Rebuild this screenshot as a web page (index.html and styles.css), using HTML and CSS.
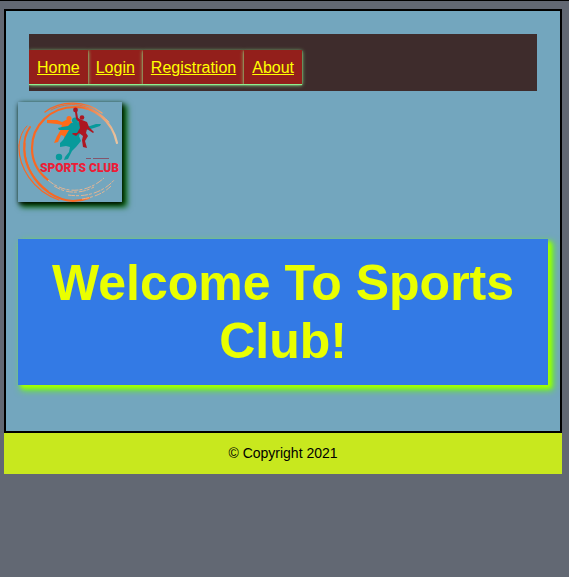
FILE: index.html
```html
<!DOCTYPE html>
<html lang="en">
<head>
<meta charset="utf-8">
<title>Sports Club</title>
<link rel="stylesheet" href="styles.css">
</head>
<body>
<main class="page">
  <nav class="menu">
    <a href="#">Home</a><a href="#">Login</a><a href="#">Registration</a><a href="#">About</a>
  </nav>
  <svg class="logo" viewBox="0 0 104 100" role="img" aria-label="Sports Club">
    <defs>
      <linearGradient id="fade" gradientUnits="userSpaceOnUse" x1="0" x2="104" y1="0" y2="0">
        <stop offset="0.6" stop-color="#f86824"/>
        <stop offset="0.95" stop-color="#e9c4a0"/>
      </linearGradient>
    </defs>
    <g fill="none" stroke="url(#fade)" stroke-linecap="round">
      <path stroke-width="2.2" d="M99 41C94 18 76 5 57 5C33 5 14 23 14 46C14 60 21 71 30 78"/>
      <path stroke-width="1.4" d="M27 10C43 -2 67 -2 84 11"/>
      <path stroke-width="1" d="M33 8C50 -1 72 0 91 20"/>
      <path stroke-width="2" d="M12 25C3 38 5 57 13 71C22 87 38 98 55 99C61 99 66 98 71 96"/>
      <path stroke-width="1.2" d="M7 41C5 60 14 77 30 89"/>
      <path stroke-width="1.2" d="M1 43C0 65 15 89 41 98"/>
      <path stroke-width="1" d="M9 24C3 30 2 37 1 43"/>
    </g>
    <g fill="none" stroke="#e2b594" stroke-width="1" stroke-dasharray="7 1 3 2">
      <path d="M30 78C46 92 68 92 86 76"/>
      <path d="M36 84C50 93 65 91 76 85"/>
      <path d="M50 93C70 96 87 89 97 77"/>
      <path d="M64 97C78 95 87 90 93 84"/>
    </g>
    <g fill="#ff6b1a">
      <circle cx="51" cy="16.500" r="2.500"/>
      <path d="M29 18L39 18L44 20L50 17L54 20L53 28L49 32L51 39L54 41L47 41L46 34L43 33L40 40L36 41L39 34L42 29L44 23L39 22L29 21Z"/>
    </g>
    <g fill="#079a9b">
      <circle cx="57" cy="18.500" r="3"/>
      <path d="M53 21L61 20L65 25L72 24L78 22L83 22L82 24L76 26L69 28L63 29L61 34L63 39L58 45L54 49L50 57L46 58L47 55L51 50L52 45L48 44L42 45L42 41L45 38L48 33L51 28L41 28L40 26L44 25L50 24Z"/>
      <circle cx="41" cy="55" r="3.200"/>
    </g>
    <g fill="#ad1722">
      <circle cx="57.500" cy="8" r="2.400"/>
      <circle cx="64" cy="15.500" r="2.300"/>
      <path d="M57 10L59 10L60 16L64 18L69 20L71 25L76 30L75 31L69 27L68 31L70 34L67 39L69 46L65 45L64 38L65 34L61 31L58 34L54 32L55 31L59 31L62 26L61 20L58 17Z"/>
    </g>
    <path d="M68 56.500H73M75 56.500H91" stroke="#85546b" stroke-width="1.200"/>
    <text class="logo-text" x="61.500" y="70" text-anchor="middle">SPORTS CLUB</text>
  </svg>
  <h1 class="banner">Welcome To Sports Club!</h1>
</main>
<footer class="footer">© Copyright 2021</footer>
</body>
</html>
```
FILE: styles.css
```css
* { box-sizing: border-box; }

html {
  min-height: 100%;
  border-top: 1px solid #000;
  background: #626873;
}

body {
  margin: 8px 7px 0 4px;
  font-family: "Liberation Sans", Arial, sans-serif;
}

.page {
  padding: 23px 12px 46px;
  border: 2px solid #000;
  background: #73a6be;
}

.menu {
  display: flex;
  margin: 0 11px;
  padding: 16px 0 7px;
  background: #3e2c2c;
}

.menu a {
  padding: 9px 8px 7px;
  background: #931f1b;
  color: #ff0;
  font-size: 16px;
  line-height: 18px;
  box-shadow: 0 1px 1px #90ee90, 0 1px 4px #90ee90;
}

.menu a:first-child {
  clip-path: inset(-4px -4px -4px 0);
}

.logo {
  display: block;
  width: 104px;
  height: 100px;
  margin-top: 11px;
  background: #73a6be;
  box-shadow: 1px 2px 5px #000, 4px 4px 6px 1px #006400;
}

.logo-text {
  fill: #ed1c35;
  font: 900 12px Roboto, sans-serif;
}

.banner {
  margin: 37px 0 0;
  padding: 15px;
  background: #337ae5;
  color: #eaff00;
  font-size: 50px;
  line-height: 58px;
  text-align: center;
  box-shadow: 3px 3px 4px #af0, 4px 4px 7px 1px #6f1;
}

.footer {
  padding: 12px;
  background: #c8e81e;
  color: #000;
  font-size: 14px;
  line-height: 17px;
  text-align: center;
}
```
